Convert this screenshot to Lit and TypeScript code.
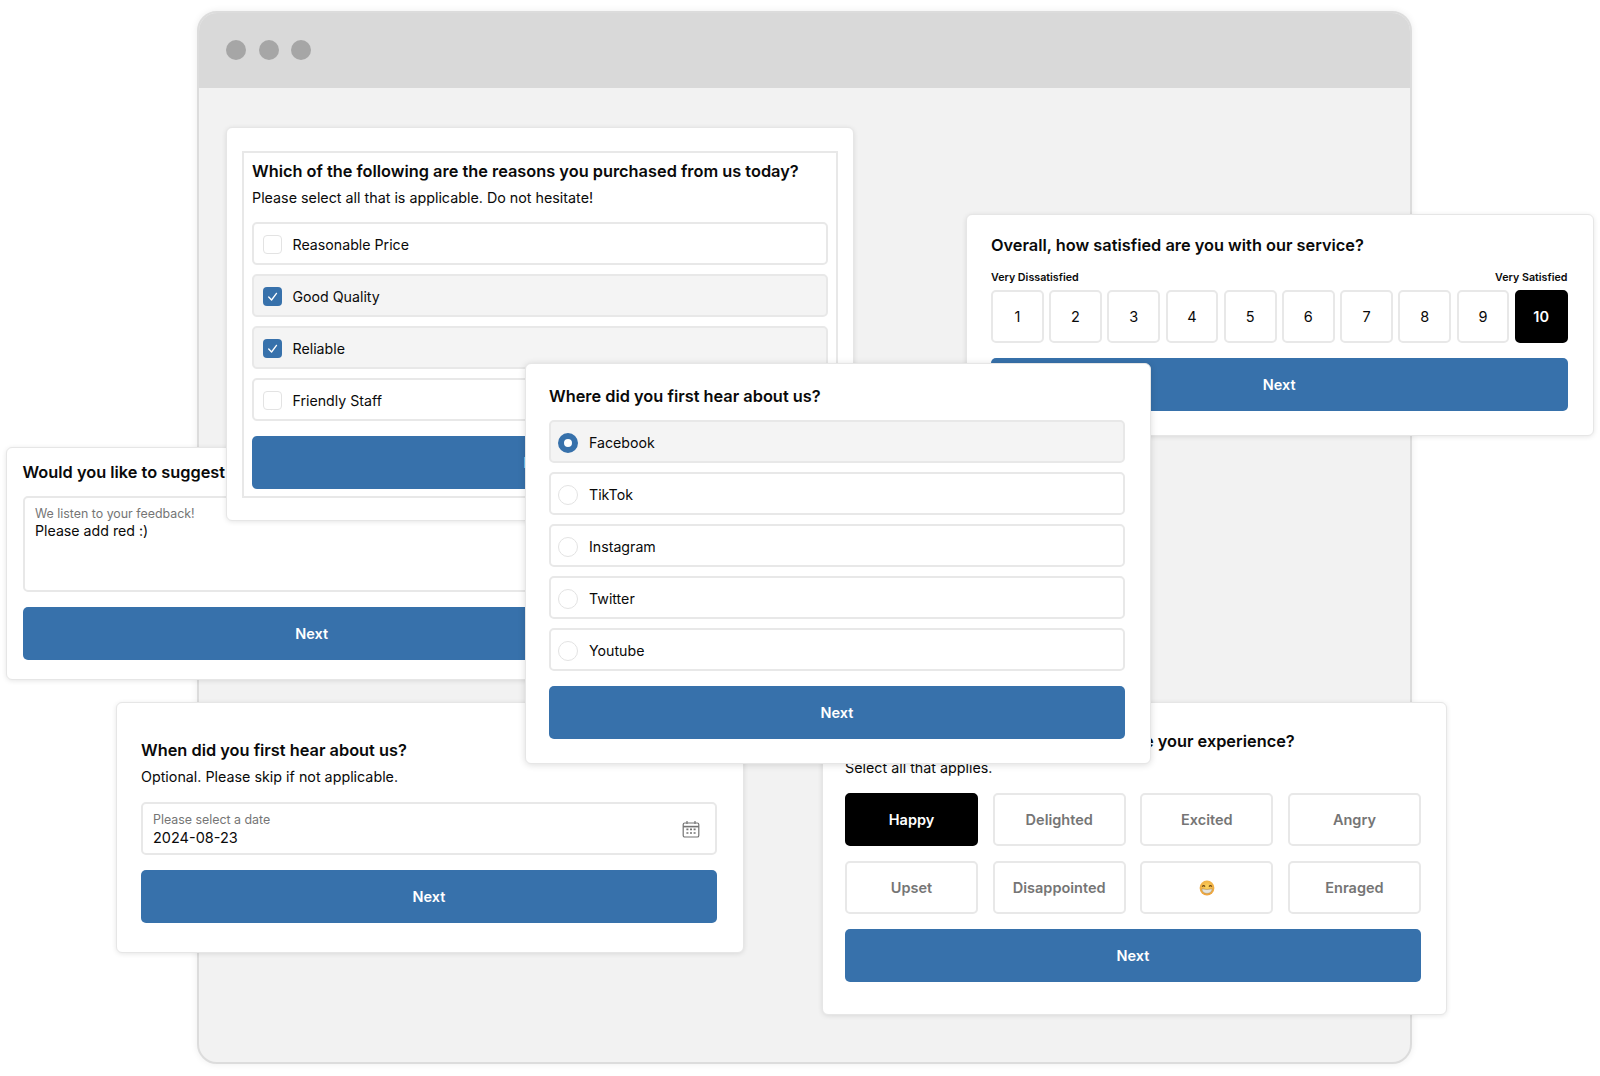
import { LitElement, html, css } from "lit";
import { customElement } from "lit/decorators.js";

const check = html`<svg class="tick" viewBox="0 0 20 20"><path d="M6 10.5l3 3.2 5.2-7" fill="none" stroke="#fff" stroke-width="1.4" stroke-linecap="round" stroke-linejoin="round"/></svg>`;

const calendar = html`<svg class="cal" viewBox="0 0 18 18" aria-hidden="true">
  <rect x="1.2" y="3" width="15.6" height="14" rx="1.6" fill="none" stroke="#737373" stroke-width="1.2"/>
  <path d="M1.2 6.6h15.6" stroke="#737373" stroke-width="1.6"/>
  <path d="M5 1v3M13 1v3" stroke="#737373" stroke-width="1.2"/>
  <path d="M4.4 9.4h2M8 9.4h2M11.6 9.4h2M4.4 13h2M8 13h2M11.6 13h2" stroke="#737373" stroke-width="1.6"/>
</svg>`;

const grin = html`<svg class="grin" viewBox="0 0 16 16" aria-hidden="true">
  <defs><radialGradient id="g" cx="50%" cy="40%" r="60%"><stop offset="0" stop-color="#fbd45f"/><stop offset="1" stop-color="#eda13a"/></radialGradient></defs>
  <circle cx="8" cy="8" r="7.4" fill="url(#g)"/>
  <path d="M3.2 6.6q1.4-2 2.8 0M10 6.6q1.4-2 2.8 0" fill="none" stroke="#6b4513" stroke-width="1.1"/>
  <path d="M2.8 8.8q5.2 1.6 10.4 0q-.5 4.6-5.2 4.6t-5.2-4.6z" fill="#e4e4e0" stroke="#9a7a45" stroke-width=".4"/>
</svg>`;

@customElement("app-root")
export class AppRoot extends LitElement {
  static styles = css`
    :host {
      display: block;
      position: relative;
      width: 1600px;
      height: 1076px;
      overflow: hidden;
      background: #fff;
      font-family: Inter, "Liberation Sans", sans-serif;
      color: #0a0a0a;
    }
    .window {
      position: absolute;
      left: 197px;
      top: 11px;
      width: 1215px;
      height: 1053px;
      box-sizing: border-box;
      border: 2px solid #dcdcdc;
      border-radius: 20px;
      background: #f2f2f2;
      box-shadow: 0 0 7px rgba(0, 0, 0, 0.08);
      overflow: hidden;
    }
    .bar {
      height: 73px;
      padding-bottom: 2px;
      background: #d9d9d9;
      display: flex;
      align-items: center;
      gap: 12.5px;
      padding-left: 27px;
    }
    .dot {
      width: 20px;
      height: 20px;
      border-radius: 50%;
      background: #a6a6a6;
    }
    .card {
      position: absolute;
      box-sizing: border-box;
      background: #fff;
      border: 1px solid #e6e6e6;
      border-radius: 6px;
      box-shadow: 0 1px 5px rgba(0, 0, 0, 0.1);
      display: flex;
      flex-direction: column;
    }
    .c-feedback {
      z-index: 1;
      left: 6px;
      top: 447px;
      width: 620px;
      height: 233px;
      padding: 13px 24px 0 15.5px;
    }
    .c-purchase {
      z-index: 2;
      left: 226px;
      top: 127px;
      width: 628px;
      height: 394px;
      padding: 23px 15px 22px 15px;
    }
    .c-satisfied {
      z-index: 2;
      left: 966px;
      top: 214px;
      width: 628px;
      height: 222px;
      padding: 19px 25.5px 0 24px;
    }
    .c-date {
      z-index: 2;
      left: 116px;
      top: 702px;
      width: 628px;
      height: 251px;
      padding: 36px 26px 0 24px;
    }
    .c-emotion {
      z-index: 2;
      left: 822px;
      top: 702px;
      width: 625px;
      height: 313px;
      padding: 27px 25px 0 22px;
    }
    .c-source {
      z-index: 3;
      left: 525px;
      top: 363px;
      width: 626px;
      height: 401px;
      padding: 21px 25px 0 23px;
      box-shadow: 0 1px 7px rgba(0, 0, 0, 0.14);
    }
    .frame {
      flex: 1;
      box-sizing: border-box;
      border: 2px solid #e8e8e8;
      padding: 7px 8px 7px 8px;
      display: flex;
      flex-direction: column;
    }
    .title {
      font-size: 16.35px;
      font-weight: 600;
      line-height: 22px;
      white-space: nowrap;
    }
    .sub {
      font-size: 14.3px;
      line-height: 20px;
      margin-top: 6px;
      white-space: nowrap;
    }
    .options {
      display: flex;
      flex-direction: column;
      gap: 9px;
      margin-top: 14px;
    }
    .c-source .options {
      margin-top: 13px;
    }
    .option {
      height: 43px;
      box-sizing: border-box;
      border: 2px solid #e8e8e8;
      border-radius: 5px;
      background: #fff;
      display: flex;
      align-items: center;
      gap: 10.5px;
      padding: 2px 0 0 9px;
      font-size: 14.2px;
    }
    .c-source .option {
      padding-left: 7px;
      gap: 11px;
    }
    .option.on {
      background: #f4f4f4;
    }
    .box {
      width: 19px;
      height: 19px;
      box-sizing: border-box;
      border: 1.5px solid #e3e3e3;
      border-radius: 4px;
      background: #fff;
      flex: none;
    }
    .box.on {
      border: none;
      background: #3771ab;
    }
    .tick {
      display: block;
      width: 19px;
      height: 19px;
    }
    .radio {
      width: 20px;
      height: 20px;
      box-sizing: border-box;
      border: 1.5px solid #e3e3e3;
      border-radius: 50%;
      background: #fff;
      flex: none;
    }
    .radio.on {
      border: 6.5px solid #3771ab;
    }
    .next {
      height: 53px;
      box-sizing: border-box;
      border: none;
      border-radius: 5px;
      background: #3771ab;
      color: #fff;
      font: 600 14.5px Inter, "Liberation Sans", sans-serif;
      display: flex;
      align-items: center;
      justify-content: center;
      margin-top: 15px;
      flex: none;
    }
    .ends {
      display: flex;
      justify-content: space-between;
      font-size: 10.7px;
      font-weight: 600;
      line-height: 14px;
      margin-top: 15px;
    }
    .scale {
      display: grid;
      grid-template-columns: repeat(10, 1fr);
      gap: 5.5px;
      margin-top: 5px;
    }
    .num {
      height: 53px;
      box-sizing: border-box;
      border: 2px solid #e8e8e8;
      border-radius: 5px;
      display: flex;
      align-items: center;
      justify-content: center;
      font-size: 14.5px;
      font-weight: 400;
      background: #fff;
    }
    .num.on {
      background: #000;
      border-color: #000;
      color: #fff;
      font-weight: 600;
    }
    .text {
      height: 96px;
      box-sizing: border-box;
      border: 2px solid #e8e8e8;
      border-radius: 5px;
      padding: 8px 10.5px;
      margin-top: 13px;
    }
    .label {
      font-size: 12.4px;
      line-height: 15px;
      color: #757575;
    }
    .value {
      font-size: 14.2px;
      line-height: 19px;
    }
    .date {
      height: 53px;
      box-sizing: border-box;
      border: 2px solid #e8e8e8;
      border-radius: 5px;
      padding: 7px 15px 0 10px;
      margin-top: 15px;
      display: flex;
      justify-content: space-between;
      align-items: center;
    }
    .date > div {
      align-self: flex-start;
    }
    .date .label {
      line-height: 17px;
    }
    .date .value {
      font-size: 14.5px;
    }
    .cal {
      width: 18px;
      height: 18px;
      margin-top: -6px;
    }
    .chips {
      display: grid;
      grid-template-columns: repeat(4, 1fr);
      gap: 15px 14.5px;
      margin-top: 15px;
    }
    .chip {
      height: 53px;
      box-sizing: border-box;
      border: 2px solid #e8e8e8;
      border-radius: 5px;
      display: flex;
      align-items: center;
      justify-content: center;
      font-size: 14.5px;
      font-weight: 600;
      color: #757575;
      background: #fff;
    }
    .chip.on {
      background: #000;
      border-color: #000;
      color: #fff;
    }
    .grin {
      width: 16px;
      height: 16px;
    }
  `;

  render() {
    const reasons = [
      ["Reasonable Price", false],
      ["Good Quality", true],
      ["Reliable", true],
      ["Friendly Staff", false],
    ] as const;
    const sources = ["Facebook", "TikTok", "Instagram", "Twitter", "Youtube"];
    const chips = ["Happy", "Delighted", "Excited", "Angry", "Upset", "Disappointed", null, "Enraged"];
    return html`
      <div class="window">
        <div class="bar"><span class="dot"></span><span class="dot"></span><span class="dot"></span></div>
      </div>

      <section class="card c-feedback">
        <div class="title">Would you like to suggest any improvements?</div>
        <div class="text">
          <div class="label">We listen to your feedback!</div>
          <div class="value">Please add red :)</div>
        </div>
        <div class="next">Next</div>
      </section>

      <section class="card c-purchase">
        <div class="frame">
          <div class="title">Which of the following are the reasons you purchased from us today?</div>
          <div class="sub">Please select all that is applicable. Do not hesitate!</div>
          <div class="options">
            ${reasons.map(
              ([t, on]) => html`<div class="option ${on ? "on" : ""}">
                <span class="box ${on ? "on" : ""}">${on ? check : ""}</span>${t}
              </div>`
            )}
          </div>
          <div class="next">Next</div>
        </div>
      </section>

      <section class="card c-satisfied">
        <div class="title">Overall, how satisfied are you with our service?</div>
        <div class="ends"><span>Very Dissatisfied</span><span>Very Satisfied</span></div>
        <div class="scale">
          ${[1, 2, 3, 4, 5, 6, 7, 8, 9, 10].map((n) => html`<div class="num ${n === 10 ? "on" : ""}">${n}</div>`)}
        </div>
        <div class="next">Next</div>
      </section>

      <section class="card c-date">
        <div class="title">When did you first hear about us?</div>
        <div class="sub">Optional. Please skip if not applicable.</div>
        <div class="date">
          <div>
            <div class="label">Please select a date</div>
            <div class="value">2024-08-23</div>
          </div>
          ${calendar}
        </div>
        <div class="next">Next</div>
      </section>

      <section class="card c-emotion">
        <div class="title">Which of these emotions best describe your experience?</div>
        <div class="sub">Select all that applies.</div>
        <div class="chips">
          ${chips.map((c, i) => html`<div class="chip ${i === 0 ? "on" : ""}">${c ?? grin}</div>`)}
        </div>
        <div class="next">Next</div>
      </section>

      <section class="card c-source">
        <div class="title">Where did you first hear about us?</div>
        <div class="options">
          ${sources.map(
            (s, i) => html`<div class="option ${i === 0 ? "on" : ""}">
              <span class="radio ${i === 0 ? "on" : ""}"></span>${s}
            </div>`
          )}
        </div>
        <div class="next">Next</div>
      </section>
    `;
  }
}
